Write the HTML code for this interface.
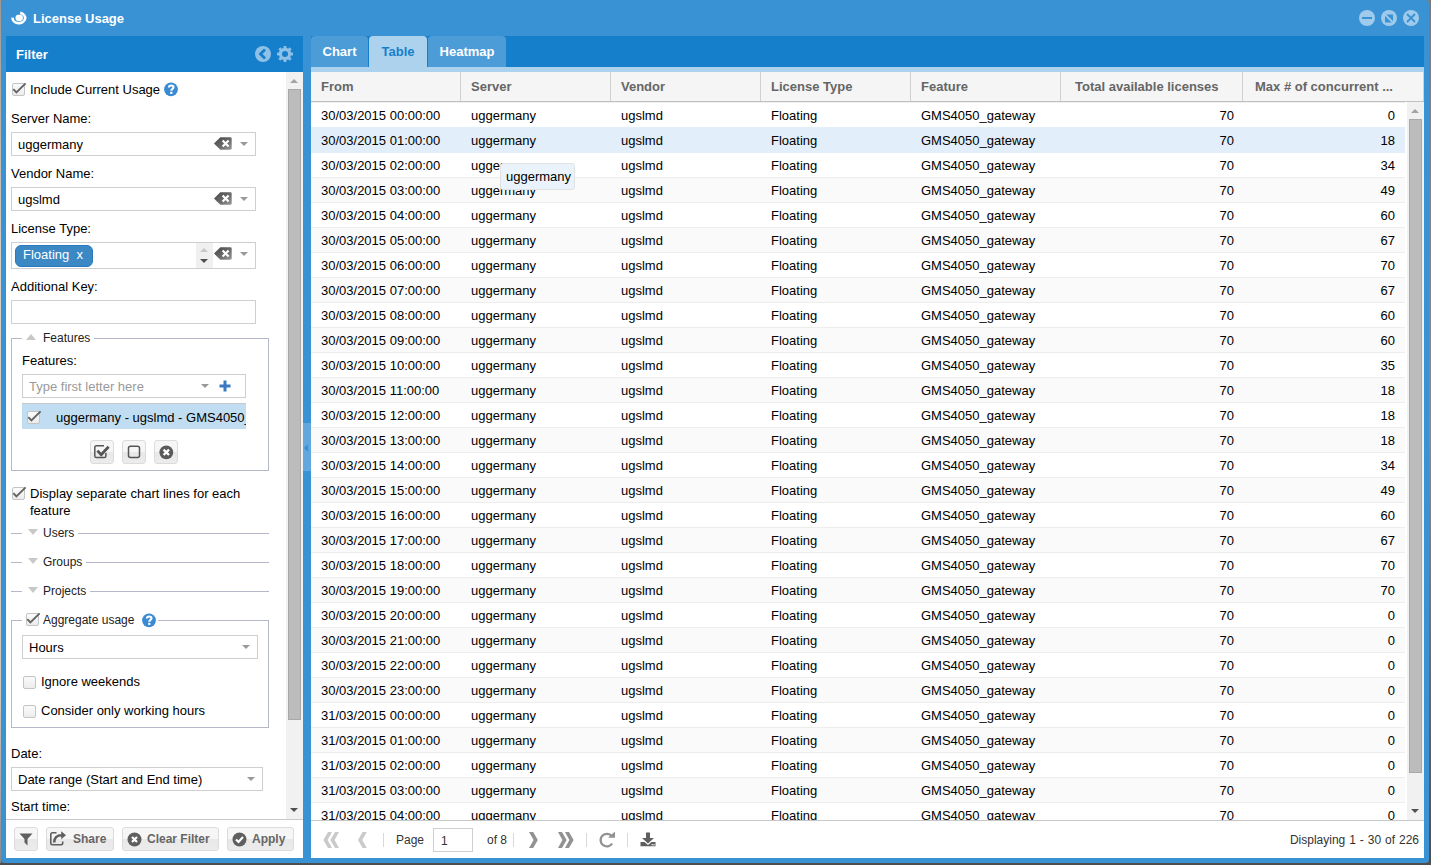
<!DOCTYPE html>
<html><head><meta charset="utf-8">
<style>
*{box-sizing:border-box;margin:0;padding:0}
html,body{width:1431px;height:865px;overflow:hidden}
body{font-family:"Liberation Sans",sans-serif;font-size:13px;color:#000;position:relative;
 background:linear-gradient(180deg,#7c7c7c 0%,#8a8580 40%,#5a5a5a 100%)}
.a{position:absolute}
.win{position:absolute;left:1px;top:0;width:1428px;height:863px;background:#3892d4;border-radius:4px 4px 4px 4px}
.wt{position:absolute;left:32px;top:11px;color:#fff;font-weight:bold;font-size:13px;line-height:16px;white-space:nowrap}
.ph{position:absolute;left:6px;top:36px;width:297px;height:36px;background:#157fcc}
.ph .t{position:absolute;left:10px;top:11px;color:#fff;font-weight:bold;font-size:13px;line-height:16px}
.fb{position:absolute;left:6px;top:72px;width:297px;height:786px;background:#fff;overflow:hidden}
.tabbar{position:absolute;left:311px;top:36px;width:1113px;height:36px;background:#157fcc}
.tab{position:absolute;top:0;height:31px;background:#4b9cd7;border-radius:4px 4px 0 0;color:#fff;font-weight:bold;font-size:13px;line-height:16px;padding-top:8px;text-align:center}
.tab.act{background:#add2ed;color:#157fcc}
.strip{position:absolute;left:0;top:31px;width:1113px;height:5px;background:#add2ed}
.grid{position:absolute;left:311px;top:72px;width:1113px;height:786px;background:#fff;overflow:hidden}
.gh{position:absolute;left:0;top:0;width:1113px;height:30px;background:#f5f5f5;border-bottom:1px solid #c0c0c0}
.hc{position:absolute;top:0;height:29px;border-right:1px solid #d0d0d0;color:#666;font-weight:bold;line-height:16px;padding:7px 10px 0 10px;white-space:nowrap}
.rows{position:absolute;left:0;top:30px;width:1096px;height:718px;overflow:hidden}
.r{position:absolute;left:0;width:1094px;height:25px;border-top:1px solid #ededed;background:#fff}
.r.alt{background:#fafafa}
.r.ov{background:#e2eef9;border-top-color:#e2eef9}
.r.aov{border-top-color:#e2eef9}
.c{position:absolute;top:0;line-height:16px;padding-top:5px;white-space:nowrap}
.lb{position:absolute;line-height:16px;white-space:nowrap}
.inp{position:absolute;border:1px solid #cfcfcf;background:#fff}
.inp .v{position:absolute;left:6px;top:3px;line-height:16px;white-space:nowrap}
.cb{position:absolute;width:13px;height:13px;border:1px solid #c4c4c4;border-radius:2px;background:linear-gradient(#fbfbfb,#ececec)}
.cb svg{position:absolute;left:0;top:-1px;overflow:visible}
.fs{position:absolute;border:1px solid #b5b8c8}
.leg{position:absolute;background:#fff;height:16px}
.tri-d{position:absolute;width:0;height:0;border-left:4px solid transparent;border-right:4px solid transparent;border-top:4px solid #999}
.btn{position:absolute;border:1px solid #dcdcdc;border-radius:3px;background:linear-gradient(#f6f6f6 0%,#f6f6f6 50%,#e8e8e8 51%,#ececec 100%);color:#666;font-weight:bold;font-size:12px;line-height:16px;white-space:nowrap}
.lg{font-size:12px;color:#222}
.sb{position:absolute;background:#f1f1f1}
.sb .th{position:absolute;background:#bcbcbc;border:1px solid #a8a8a8}

</style></head><body>

<svg width="0" height="0" style="position:absolute"><defs><linearGradient id="cgr" x1="0" y1="0" x2="1" y2="1"><stop offset="0" stop-color="#454545"/><stop offset="0.55" stop-color="#6a6a6a"/><stop offset="1" stop-color="#9a9a9a"/></linearGradient></defs></svg>
<div class="win">
<div class="wt">License Usage</div>
</div>
<div class="ph"><div class="t">Filter</div></div>
<div class="fb"></div>
<div class="cb" style="left:12px;top:83px"><svg width="13" height="13"><polyline points="0.3,6.2 3.4,9.5 12.6,0.3" fill="none" stroke="#636363" stroke-width="1.9"/></svg></div>
<div class="lb" style="left:30px;top:82px">Include Current Usage</div>
<svg class="a" style="left:164px;top:82px" width="15" height="15" viewBox="0 0 15 15"><circle cx="7" cy="7.3" r="6.9" fill="#3a8ad4"/><path d="M4.9 5.4 C4.9 3.9 5.9 3.5 7.2 3.5 C8.6 3.5 9.5 4.2 9.5 5.3 C9.5 6.8 7.3 6.9 7.3 8.7" fill="none" stroke="#fff" stroke-width="2.1"/><rect x="6.2" y="9.8" width="2.2" height="2.1" fill="#fff"/></svg>
<div class="lb" style="left:11px;top:111px">Server Name:</div>
<div class="inp" style="left:11px;top:132px;width:245px;height:24px"><div class="v" style="left:6px;top:4px;color:#000">uggermany</div></div>
<svg class="a" style="left:214px;top:137px" width="18" height="13" viewBox="0 0 18 13"><path d="M6.3 0.3 L16.3 0.3 Q17.7 0.3 17.7 1.7 L17.7 11.3 Q17.7 12.7 16.3 12.7 L6.3 12.7 L0 6.5 Z" fill="url(#cgr)"/><path d="M8.6 3.4 L14.6 9.6 M14.6 3.4 L8.6 9.6" stroke="#fff" stroke-width="2.1"/></svg>
<div class="tri-d" style="left:240px;top:142px;border-top-color:#999"></div>
<div class="lb" style="left:11px;top:166px">Vendor Name:</div>
<div class="inp" style="left:11px;top:187px;width:245px;height:24px"><div class="v" style="left:6px;top:4px;color:#000">ugslmd</div></div>
<svg class="a" style="left:214px;top:192px" width="18" height="13" viewBox="0 0 18 13"><path d="M6.3 0.3 L16.3 0.3 Q17.7 0.3 17.7 1.7 L17.7 11.3 Q17.7 12.7 16.3 12.7 L6.3 12.7 L0 6.5 Z" fill="url(#cgr)"/><path d="M8.6 3.4 L14.6 9.6 M14.6 3.4 L8.6 9.6" stroke="#fff" stroke-width="2.1"/></svg>
<div class="tri-d" style="left:240px;top:197px;border-top-color:#999"></div>
<div class="lb" style="left:11px;top:221px">License Type:</div>
<div class="inp" style="left:11px;top:242px;width:245px;height:27px"></div>
<div class="a" style="left:15px;top:245px;width:78px;height:22px;border-radius:6px;background:#3b88c5;border:1px solid #2a78be;color:#fff;line-height:16px;padding:1px 0 0 7px;white-space:nowrap">Floating&nbsp;&nbsp;x</div>
<div class="a" style="left:196px;top:243px;width:17px;height:25px;background:#f0f0f0"></div>
<div class="a" style="left:200px;top:248px;width:0;height:0;border-left:4px solid transparent;border-right:4px solid transparent;border-bottom:4px solid #c8c8c8"></div>
<div class="a" style="left:200px;top:259px;width:0;height:0;border-left:4px solid transparent;border-right:4px solid transparent;border-top:4px solid #505050"></div>
<svg class="a" style="left:214px;top:247px" width="18" height="13" viewBox="0 0 18 13"><path d="M6.3 0.3 L16.3 0.3 Q17.7 0.3 17.7 1.7 L17.7 11.3 Q17.7 12.7 16.3 12.7 L6.3 12.7 L0 6.5 Z" fill="url(#cgr)"/><path d="M8.6 3.4 L14.6 9.6 M14.6 3.4 L8.6 9.6" stroke="#fff" stroke-width="2.1"/></svg>
<div class="tri-d" style="left:240px;top:252px;border-top-color:#999"></div>
<div class="lb" style="left:11px;top:279px">Additional Key:</div>
<div class="inp" style="left:11px;top:300px;width:245px;height:24px"></div>
<div class="fs" style="left:11px;top:338px;width:258px;height:133px"></div>
<div class="leg" style="left:22px;top:330px;width:72px"></div>
<div class="a" style="left:26px;top:334px;width:0;height:0;border-left:5px solid transparent;border-right:5px solid transparent;border-bottom:6px solid #c8c8c8"></div>
<div class="lb lg" style="left:43px;top:330px">Features</div>
<div class="lb" style="left:22px;top:353px">Features:</div>
<div class="inp" style="left:22px;top:374px;width:224px;height:24px"><div class="v" style="left:6px;top:4px;color:#9a9a9a">Type first letter here</div></div>
<div class="tri-d" style="left:201px;top:384px;border-top-color:#999"></div>
<svg class="a" style="left:219px;top:380px" width="12" height="12"><path d="M4.5 0.5h3v4h4v3h-4v4h-3v-4h-4v-3h4z" fill="#3a78c2"/></svg>
<div class="a" style="left:22px;top:403px;width:224px;height:1px;background:#c8c8c8"></div>
<div class="a" style="left:22px;top:404px;width:224px;height:25px;background:#c1ddf1;overflow:hidden"><div class="lb" style="left:34px;top:6px">uggermany - ugslmd - GMS4050_gateway</div></div>
<div class="cb" style="left:27px;top:411px"><svg width="13" height="13"><polyline points="0.3,6.2 3.4,9.5 12.6,0.3" fill="none" stroke="#636363" stroke-width="1.9"/></svg></div>
<div class="btn" style="left:90px;top:440px;width:24px;height:24px"></div>
<div class="btn" style="left:122px;top:440px;width:24px;height:24px"></div>
<div class="btn" style="left:154px;top:440px;width:24px;height:24px"></div>
<svg class="a" style="left:94px;top:445px" width="16" height="14" viewBox="0 0 16 14"><path d="M10 0.8 L2.5 0.8 Q0.8 0.8 0.8 2.5 L0.8 11 Q0.8 12.6 2.5 12.6 L10.2 12.6 Q11.9 12.6 11.9 11 L11.9 8" fill="none" stroke="#555" stroke-width="1.5"/><polyline points="3.4,5.6 7.2,9.6 14.6,1.8" fill="none" stroke="#555" stroke-width="2.8"/></svg>
<svg class="a" style="left:127px;top:445px" width="14" height="14" viewBox="0 0 14 14"><rect x="1.5" y="1.3" width="11" height="11.3" rx="2" fill="none" stroke="#555" stroke-width="1.5"/></svg>
<svg class="a" style="left:159px;top:445px" width="15" height="15" viewBox="0 0 15 15"><circle cx="7.3" cy="7.3" r="6.9" fill="#5a5a5a"/><path d="M4.6 4.6L10 10M10 4.6L4.6 10" stroke="#fff" stroke-width="2.3"/></svg>
<div class="cb" style="left:12px;top:487px"><svg width="13" height="13"><polyline points="0.3,6.2 3.4,9.5 12.6,0.3" fill="none" stroke="#636363" stroke-width="1.9"/></svg></div>
<div class="lb" style="left:30px;top:485px;line-height:17px;white-space:normal;width:230px">Display separate chart lines for each feature</div>
<div class="a" style="left:11px;top:533px;width:258px;height:1px;background:#b5b8c8"></div>
<div class="leg" style="left:22px;top:525px;width:56px"></div>
<div class="a" style="left:28px;top:529px;width:0;height:0;border-left:5px solid transparent;border-right:5px solid transparent;border-top:6px solid #c8c8c8"></div>
<div class="lb lg" style="left:43px;top:525px">Users</div>
<div class="a" style="left:11px;top:562px;width:258px;height:1px;background:#b5b8c8"></div>
<div class="leg" style="left:22px;top:554px;width:64px"></div>
<div class="a" style="left:28px;top:558px;width:0;height:0;border-left:5px solid transparent;border-right:5px solid transparent;border-top:6px solid #c8c8c8"></div>
<div class="lb lg" style="left:43px;top:554px">Groups</div>
<div class="a" style="left:11px;top:591px;width:258px;height:1px;background:#b5b8c8"></div>
<div class="leg" style="left:22px;top:583px;width:68px"></div>
<div class="a" style="left:28px;top:587px;width:0;height:0;border-left:5px solid transparent;border-right:5px solid transparent;border-top:6px solid #c8c8c8"></div>
<div class="lb lg" style="left:43px;top:583px">Projects</div>
<div class="fs" style="left:11px;top:620px;width:258px;height:108px"></div>
<div class="leg" style="left:22px;top:612px;width:136px"></div>
<div class="cb" style="left:26px;top:613px"><svg width="13" height="13"><polyline points="0.3,6.2 3.4,9.5 12.6,0.3" fill="none" stroke="#636363" stroke-width="1.9"/></svg></div>
<div class="lb lg" style="left:43px;top:612px">Aggregate usage</div>
<svg class="a" style="left:142px;top:613px" width="15" height="15" viewBox="0 0 15 15"><circle cx="7" cy="7.3" r="6.9" fill="#3a8ad4"/><path d="M4.9 5.4 C4.9 3.9 5.9 3.5 7.2 3.5 C8.6 3.5 9.5 4.2 9.5 5.3 C9.5 6.8 7.3 6.9 7.3 8.7" fill="none" stroke="#fff" stroke-width="2.1"/><rect x="6.2" y="9.8" width="2.2" height="2.1" fill="#fff"/></svg>
<div class="inp" style="left:22px;top:635px;width:236px;height:24px"><div class="v" style="left:6px;top:4px;color:#000">Hours</div></div>
<div class="tri-d" style="left:242px;top:645px;border-top-color:#999"></div>
<div class="cb" style="left:23px;top:676px"></div>
<div class="lb" style="left:41px;top:674px">Ignore weekends</div>
<div class="cb" style="left:23px;top:705px"></div>
<div class="lb" style="left:41px;top:703px">Consider only working hours</div>
<div class="lb" style="left:11px;top:746px">Date:</div>
<div class="inp" style="left:11px;top:767px;width:252px;height:24px"><div class="v" style="left:6px;top:4px;color:#000">Date range (Start and End time)</div></div>
<div class="tri-d" style="left:247px;top:777px;border-top-color:#999"></div>
<div class="lb" style="left:11px;top:799px">Start time:</div>
<div class="tabbar"><div class="tab" style="left:0;width:57px">Chart</div><div class="tab act" style="left:58px;width:58px">Table</div><div class="tab" style="left:117px;width:78px">Heatmap</div><div class="strip"></div></div>
<div class="grid">
<div class="gh">
<div class="hc" style="left:0px;width:150px;padding-left:10px">From</div>
<div class="hc" style="left:150px;width:150px;padding-left:10px">Server</div>
<div class="hc" style="left:300px;width:150px;padding-left:10px">Vendor</div>
<div class="hc" style="left:450px;width:150px;padding-left:10px">License Type</div>
<div class="hc" style="left:600px;width:150px;padding-left:10px">Feature</div>
<div class="hc" style="left:750px;width:182px;padding-left:14px">Total available licenses</div>
<div class="hc" style="left:932px;width:181px;padding-left:12px">Max # of concurrent ...</div>
</div>
<div class="rows">
<div class="r" style="top:0px"><div class="c" style="left:10px">30/03/2015 00:00:00</div><div class="c" style="left:160px">uggermany</div><div class="c" style="left:310px">ugslmd</div><div class="c" style="left:460px">Floating</div><div class="c" style="left:610px">GMS4050_gateway</div><div class="c" style="right:171px">70</div><div class="c" style="right:10px">0</div></div>
<div class="r alt ov" style="top:25px"><div class="c" style="left:10px">30/03/2015 01:00:00</div><div class="c" style="left:160px">uggermany</div><div class="c" style="left:310px">ugslmd</div><div class="c" style="left:460px">Floating</div><div class="c" style="left:610px">GMS4050_gateway</div><div class="c" style="right:171px">70</div><div class="c" style="right:10px">18</div></div>
<div class="r aov" style="top:50px"><div class="c" style="left:10px">30/03/2015 02:00:00</div><div class="c" style="left:160px">uggermany</div><div class="c" style="left:310px">ugslmd</div><div class="c" style="left:460px">Floating</div><div class="c" style="left:610px">GMS4050_gateway</div><div class="c" style="right:171px">70</div><div class="c" style="right:10px">34</div></div>
<div class="r alt" style="top:75px"><div class="c" style="left:10px">30/03/2015 03:00:00</div><div class="c" style="left:160px">uggermany</div><div class="c" style="left:310px">ugslmd</div><div class="c" style="left:460px">Floating</div><div class="c" style="left:610px">GMS4050_gateway</div><div class="c" style="right:171px">70</div><div class="c" style="right:10px">49</div></div>
<div class="r" style="top:100px"><div class="c" style="left:10px">30/03/2015 04:00:00</div><div class="c" style="left:160px">uggermany</div><div class="c" style="left:310px">ugslmd</div><div class="c" style="left:460px">Floating</div><div class="c" style="left:610px">GMS4050_gateway</div><div class="c" style="right:171px">70</div><div class="c" style="right:10px">60</div></div>
<div class="r alt" style="top:125px"><div class="c" style="left:10px">30/03/2015 05:00:00</div><div class="c" style="left:160px">uggermany</div><div class="c" style="left:310px">ugslmd</div><div class="c" style="left:460px">Floating</div><div class="c" style="left:610px">GMS4050_gateway</div><div class="c" style="right:171px">70</div><div class="c" style="right:10px">67</div></div>
<div class="r" style="top:150px"><div class="c" style="left:10px">30/03/2015 06:00:00</div><div class="c" style="left:160px">uggermany</div><div class="c" style="left:310px">ugslmd</div><div class="c" style="left:460px">Floating</div><div class="c" style="left:610px">GMS4050_gateway</div><div class="c" style="right:171px">70</div><div class="c" style="right:10px">70</div></div>
<div class="r alt" style="top:175px"><div class="c" style="left:10px">30/03/2015 07:00:00</div><div class="c" style="left:160px">uggermany</div><div class="c" style="left:310px">ugslmd</div><div class="c" style="left:460px">Floating</div><div class="c" style="left:610px">GMS4050_gateway</div><div class="c" style="right:171px">70</div><div class="c" style="right:10px">67</div></div>
<div class="r" style="top:200px"><div class="c" style="left:10px">30/03/2015 08:00:00</div><div class="c" style="left:160px">uggermany</div><div class="c" style="left:310px">ugslmd</div><div class="c" style="left:460px">Floating</div><div class="c" style="left:610px">GMS4050_gateway</div><div class="c" style="right:171px">70</div><div class="c" style="right:10px">60</div></div>
<div class="r alt" style="top:225px"><div class="c" style="left:10px">30/03/2015 09:00:00</div><div class="c" style="left:160px">uggermany</div><div class="c" style="left:310px">ugslmd</div><div class="c" style="left:460px">Floating</div><div class="c" style="left:610px">GMS4050_gateway</div><div class="c" style="right:171px">70</div><div class="c" style="right:10px">60</div></div>
<div class="r" style="top:250px"><div class="c" style="left:10px">30/03/2015 10:00:00</div><div class="c" style="left:160px">uggermany</div><div class="c" style="left:310px">ugslmd</div><div class="c" style="left:460px">Floating</div><div class="c" style="left:610px">GMS4050_gateway</div><div class="c" style="right:171px">70</div><div class="c" style="right:10px">35</div></div>
<div class="r alt" style="top:275px"><div class="c" style="left:10px">30/03/2015 11:00:00</div><div class="c" style="left:160px">uggermany</div><div class="c" style="left:310px">ugslmd</div><div class="c" style="left:460px">Floating</div><div class="c" style="left:610px">GMS4050_gateway</div><div class="c" style="right:171px">70</div><div class="c" style="right:10px">18</div></div>
<div class="r" style="top:300px"><div class="c" style="left:10px">30/03/2015 12:00:00</div><div class="c" style="left:160px">uggermany</div><div class="c" style="left:310px">ugslmd</div><div class="c" style="left:460px">Floating</div><div class="c" style="left:610px">GMS4050_gateway</div><div class="c" style="right:171px">70</div><div class="c" style="right:10px">18</div></div>
<div class="r alt" style="top:325px"><div class="c" style="left:10px">30/03/2015 13:00:00</div><div class="c" style="left:160px">uggermany</div><div class="c" style="left:310px">ugslmd</div><div class="c" style="left:460px">Floating</div><div class="c" style="left:610px">GMS4050_gateway</div><div class="c" style="right:171px">70</div><div class="c" style="right:10px">18</div></div>
<div class="r" style="top:350px"><div class="c" style="left:10px">30/03/2015 14:00:00</div><div class="c" style="left:160px">uggermany</div><div class="c" style="left:310px">ugslmd</div><div class="c" style="left:460px">Floating</div><div class="c" style="left:610px">GMS4050_gateway</div><div class="c" style="right:171px">70</div><div class="c" style="right:10px">34</div></div>
<div class="r alt" style="top:375px"><div class="c" style="left:10px">30/03/2015 15:00:00</div><div class="c" style="left:160px">uggermany</div><div class="c" style="left:310px">ugslmd</div><div class="c" style="left:460px">Floating</div><div class="c" style="left:610px">GMS4050_gateway</div><div class="c" style="right:171px">70</div><div class="c" style="right:10px">49</div></div>
<div class="r" style="top:400px"><div class="c" style="left:10px">30/03/2015 16:00:00</div><div class="c" style="left:160px">uggermany</div><div class="c" style="left:310px">ugslmd</div><div class="c" style="left:460px">Floating</div><div class="c" style="left:610px">GMS4050_gateway</div><div class="c" style="right:171px">70</div><div class="c" style="right:10px">60</div></div>
<div class="r alt" style="top:425px"><div class="c" style="left:10px">30/03/2015 17:00:00</div><div class="c" style="left:160px">uggermany</div><div class="c" style="left:310px">ugslmd</div><div class="c" style="left:460px">Floating</div><div class="c" style="left:610px">GMS4050_gateway</div><div class="c" style="right:171px">70</div><div class="c" style="right:10px">67</div></div>
<div class="r" style="top:450px"><div class="c" style="left:10px">30/03/2015 18:00:00</div><div class="c" style="left:160px">uggermany</div><div class="c" style="left:310px">ugslmd</div><div class="c" style="left:460px">Floating</div><div class="c" style="left:610px">GMS4050_gateway</div><div class="c" style="right:171px">70</div><div class="c" style="right:10px">70</div></div>
<div class="r alt" style="top:475px"><div class="c" style="left:10px">30/03/2015 19:00:00</div><div class="c" style="left:160px">uggermany</div><div class="c" style="left:310px">ugslmd</div><div class="c" style="left:460px">Floating</div><div class="c" style="left:610px">GMS4050_gateway</div><div class="c" style="right:171px">70</div><div class="c" style="right:10px">70</div></div>
<div class="r" style="top:500px"><div class="c" style="left:10px">30/03/2015 20:00:00</div><div class="c" style="left:160px">uggermany</div><div class="c" style="left:310px">ugslmd</div><div class="c" style="left:460px">Floating</div><div class="c" style="left:610px">GMS4050_gateway</div><div class="c" style="right:171px">70</div><div class="c" style="right:10px">0</div></div>
<div class="r alt" style="top:525px"><div class="c" style="left:10px">30/03/2015 21:00:00</div><div class="c" style="left:160px">uggermany</div><div class="c" style="left:310px">ugslmd</div><div class="c" style="left:460px">Floating</div><div class="c" style="left:610px">GMS4050_gateway</div><div class="c" style="right:171px">70</div><div class="c" style="right:10px">0</div></div>
<div class="r" style="top:550px"><div class="c" style="left:10px">30/03/2015 22:00:00</div><div class="c" style="left:160px">uggermany</div><div class="c" style="left:310px">ugslmd</div><div class="c" style="left:460px">Floating</div><div class="c" style="left:610px">GMS4050_gateway</div><div class="c" style="right:171px">70</div><div class="c" style="right:10px">0</div></div>
<div class="r alt" style="top:575px"><div class="c" style="left:10px">30/03/2015 23:00:00</div><div class="c" style="left:160px">uggermany</div><div class="c" style="left:310px">ugslmd</div><div class="c" style="left:460px">Floating</div><div class="c" style="left:610px">GMS4050_gateway</div><div class="c" style="right:171px">70</div><div class="c" style="right:10px">0</div></div>
<div class="r" style="top:600px"><div class="c" style="left:10px">31/03/2015 00:00:00</div><div class="c" style="left:160px">uggermany</div><div class="c" style="left:310px">ugslmd</div><div class="c" style="left:460px">Floating</div><div class="c" style="left:610px">GMS4050_gateway</div><div class="c" style="right:171px">70</div><div class="c" style="right:10px">0</div></div>
<div class="r alt" style="top:625px"><div class="c" style="left:10px">31/03/2015 01:00:00</div><div class="c" style="left:160px">uggermany</div><div class="c" style="left:310px">ugslmd</div><div class="c" style="left:460px">Floating</div><div class="c" style="left:610px">GMS4050_gateway</div><div class="c" style="right:171px">70</div><div class="c" style="right:10px">0</div></div>
<div class="r" style="top:650px"><div class="c" style="left:10px">31/03/2015 02:00:00</div><div class="c" style="left:160px">uggermany</div><div class="c" style="left:310px">ugslmd</div><div class="c" style="left:460px">Floating</div><div class="c" style="left:610px">GMS4050_gateway</div><div class="c" style="right:171px">70</div><div class="c" style="right:10px">0</div></div>
<div class="r alt" style="top:675px"><div class="c" style="left:10px">31/03/2015 03:00:00</div><div class="c" style="left:160px">uggermany</div><div class="c" style="left:310px">ugslmd</div><div class="c" style="left:460px">Floating</div><div class="c" style="left:610px">GMS4050_gateway</div><div class="c" style="right:171px">70</div><div class="c" style="right:10px">0</div></div>
<div class="r" style="top:700px"><div class="c" style="left:10px">31/03/2015 04:00:00</div><div class="c" style="left:160px">uggermany</div><div class="c" style="left:310px">ugslmd</div><div class="c" style="left:460px">Floating</div><div class="c" style="left:610px">GMS4050_gateway</div><div class="c" style="right:171px">70</div><div class="c" style="right:10px">0</div></div>
</div>
</div>
<svg class="a" style="left:10px;top:10px" width="18" height="16" viewBox="0 0 18 16"><path d="M2.55 7.6 A6.3 5.2 0 1 0 10.2 2.85" fill="none" stroke="#fff" stroke-width="2.7"/><rect x="5.6" y="4.7" width="7.2" height="6.2" rx="2.6" fill="#fff"/></svg>
<svg class="a" style="left:1359px;top:10px" width="60" height="16" viewBox="0 0 60 16"><circle cx="8" cy="8" r="8" fill="#9fcaeb"/><rect x="3" y="7" width="10" height="2" fill="#3892d4"/><circle cx="30" cy="8" r="8" fill="#9fcaeb"/><rect x="26" y="4.5" width="8" height="8" fill="#3892d4"/><path d="M25 3.5 L35 13.5" stroke="#9fcaeb" stroke-width="1.8"/><circle cx="52" cy="8" r="8" fill="#9fcaeb"/><path d="M48 4 L56 12 M56 4 L48 12" stroke="#3892d4" stroke-width="1.8"/></svg>
<svg class="a" style="left:255px;top:46px" width="40" height="16" viewBox="0 0 40 16"><circle cx="8" cy="8" r="8" fill="#8fc0e6"/><path d="M10 3.5 L5.5 8 L10 12.5" fill="none" stroke="#157fcc" stroke-width="2.8"/><g transform="translate(30,8)" fill="#8fc0e6"><circle r="6.2"/><rect x="-1.4" y="-8" width="2.8" height="4" transform="rotate(0)"/><rect x="-1.4" y="-8" width="2.8" height="4" transform="rotate(45)"/><rect x="-1.4" y="-8" width="2.8" height="4" transform="rotate(90)"/><rect x="-1.4" y="-8" width="2.8" height="4" transform="rotate(135)"/><rect x="-1.4" y="-8" width="2.8" height="4" transform="rotate(180)"/><rect x="-1.4" y="-8" width="2.8" height="4" transform="rotate(225)"/><rect x="-1.4" y="-8" width="2.8" height="4" transform="rotate(270)"/><rect x="-1.4" y="-8" width="2.8" height="4" transform="rotate(315)"/><circle r="3" fill="#157fcc"/></g></svg>
<div class="sb" style="left:286px;top:72px;width:17px;height:747px"><div class="th" style="left:2px;top:17px;width:13px;height:631px"></div></div>
<div class="a" style="left:290px;top:79px;width:0;height:0;border-left:4px solid transparent;border-right:4px solid transparent;border-bottom:4px solid #a3a3a3"></div>
<div class="a" style="left:290px;top:808px;width:0;height:0;border-left:4px solid transparent;border-right:4px solid transparent;border-top:4px solid #505050"></div>
<div class="a" style="left:6px;top:819px;width:297px;height:1px;background:#c8c8c8"></div>
<div class="a" style="left:6px;top:820px;width:297px;height:38px;background:#fff"></div>
<div class="btn" style="left:14px;top:827px;width:24px;height:24px"></div>
<svg class="a" style="left:19px;top:833px" width="14" height="13" viewBox="0 0 14 13"><path d="M0.5 0.5 L13.5 0.5 L8.5 6 L8.5 12.5 L5.5 9.5 L5.5 6 Z" fill="#5f5f5f"/></svg>
<div class="btn" style="left:46px;top:827px;width:68px;height:24px"><span style="position:absolute;left:26px;top:3px">Share</span></div>
<svg class="a" style="left:50px;top:831px" width="17" height="15" viewBox="0 0 17 15"><path d="M6.5 1.8 L2.5 1.8 Q0.8 1.8 0.8 3.5 L0.8 12 Q0.8 13.7 2.5 13.7 L11 13.7 Q12.7 13.7 12.7 12 L12.7 10.5" fill="none" stroke="#5f5f5f" stroke-width="1.6"/><path d="M4.2 11.5 Q4.2 4.3 11.8 4.3" fill="none" stroke="#5f5f5f" stroke-width="2.6"/><path d="M11.2 0.3 L16 4.3 L11.2 8.3 Z" fill="#5f5f5f"/></svg>
<div class="btn" style="left:122px;top:827px;width:97px;height:24px"><span style="position:absolute;left:24px;top:3px">Clear Filter</span></div>
<svg class="a" style="left:127px;top:832px" width="15" height="15" viewBox="0 0 15 15"><circle cx="7.5" cy="7.5" r="7" fill="#5f5f5f"/><path d="M5 5L10 10M10 5L5 10" stroke="#fff" stroke-width="2.2"/></svg>
<div class="btn" style="left:227px;top:827px;width:67px;height:24px"><span style="position:absolute;left:24px;top:3px">Apply</span></div>
<svg class="a" style="left:232px;top:832px" width="15" height="15" viewBox="0 0 15 15"><circle cx="7.5" cy="7.5" r="7" fill="#5f5f5f"/><path d="M4 7.5L6.5 10L11 5" fill="none" stroke="#fff" stroke-width="2.2"/></svg>
<div class="sb" style="left:1407px;top:102px;width:17px;height:718px"><div class="th" style="left:2px;top:17px;width:13px;height:654px"></div></div>
<div class="a" style="left:1411px;top:109px;width:0;height:0;border-left:4px solid transparent;border-right:4px solid transparent;border-bottom:4px solid #a3a3a3"></div>
<div class="a" style="left:1411px;top:809px;width:0;height:0;border-left:4px solid transparent;border-right:4px solid transparent;border-top:4px solid #505050"></div>
<div class="a" style="left:311px;top:820px;width:1113px;height:1px;background:#c8c8c8"></div>
<div class="a" style="left:311px;top:821px;width:1113px;height:37px;background:#fff"></div>
<svg class="a" style="left:323px;top:832px" width="17" height="16" viewBox="0 0 17 16"><path d="M5 0 L9 0 L4.6 8 L9 16 L5 16 L0.4 8 Z M12 0 L16 0 L11.6 8 L16 16 L12 16 L7.4 8 Z" fill="#cacaca"/></svg>
<svg class="a" style="left:358px;top:832px" width="10" height="16" viewBox="0 0 10 16"><path d="M4.6 0 L8.8 0 L4.2 8 L8.8 16 L4.6 16 L0 8 Z" fill="#cacaca"/></svg>
<div class="a" style="left:383px;top:833px;width:1px;height:14px;background:#d8d8d8"></div>
<div class="a" style="left:513px;top:833px;width:1px;height:14px;background:#d8d8d8"></div>
<div class="a" style="left:586px;top:833px;width:1px;height:14px;background:#d8d8d8"></div>
<div class="a" style="left:627px;top:833px;width:1px;height:14px;background:#d8d8d8"></div>
<div class="lb" style="left:396px;top:832px;color:#333;font-size:12px">Page</div>
<div class="inp" style="left:433px;top:828px;width:40px;height:24px"><div class="v" style="left:7px;top:4px;color:#333;font-size:12px">1</div></div>
<div class="lb" style="left:487px;top:832px;color:#333;font-size:12px">of 8</div>
<svg class="a" style="left:529px;top:832px" width="10" height="16" viewBox="0 0 10 16"><path d="M0 0 L4.2 0 L8.8 8 L4.2 16 L0 16 L4.6 8 Z" fill="#929292"/></svg>
<svg class="a" style="left:558px;top:832px" width="17" height="16" viewBox="0 0 17 16"><path d="M0 0 L4 0 L8.6 8 L4 16 L0 16 L4.4 8 Z M7 0 L11 0 L15.6 8 L11 16 L7 16 L11.4 8 Z" fill="#929292"/></svg>
<svg class="a" style="left:599px;top:832px" width="17" height="17" viewBox="0 0 17 17"><path d="M13.2 11.5 A6.3 6.3 0 1 1 12.3 3.6" fill="none" stroke="#929292" stroke-width="2.3"/><path d="M9 5.8 L16 5.8 L16 -0.5 Z" fill="#929292"/></svg>
<svg class="a" style="left:640px;top:832px" width="16" height="15" viewBox="0 0 16 15"><path d="M6 0.5 L10 0.5 L10 6 L14 6 L8 11.5 L2 6 L6 6 Z" fill="#5f5f5f"/><path d="M0.5 10 L4.5 10 L8 13 L11.5 10 L15.5 10 L15.5 14.3 L0.5 14.3 Z" fill="#5f5f5f"/><rect x="11.5" y="12" width="1.4" height="1.4" fill="#ddd"/><rect x="13.3" y="12" width="1.4" height="1.4" fill="#ddd"/></svg>
<div class="lb" style="right:12px;top:832px;color:#333;font-size:12px;word-spacing:0.6px">Displaying 1 - 30 of 226</div>
<div class="a" style="left:303px;top:423px;width:8px;height:48px;background:#62a8de"></div>
<div class="a" style="left:304px;top:444px;width:0;height:0;border-top:4px solid transparent;border-bottom:4px solid transparent;border-right:4px solid #3a8fd3"></div>
<div class="a" style="left:0;top:0;width:1px;height:865px;background:linear-gradient(#a09890,#d6cec6 30%,#d0c8c0 80%,#888)"></div>
<div class="a" style="left:0;top:863px;width:1431px;height:2px;background:#4e4e4e"></div>
<div class="a" style="left:1429px;top:0;width:2px;height:865px;background:linear-gradient(#7a7a7a,#8a8a8a 50%,#4e4e4e)"></div>
<div class="a" style="left:500px;top:163px;width:75px;height:27px;background:#eaf3fb;border:1px solid #e1e1e1;border-radius:3px"><div class="lb" style="left:5px;top:5px">uggermany</div></div>
</body></html>
